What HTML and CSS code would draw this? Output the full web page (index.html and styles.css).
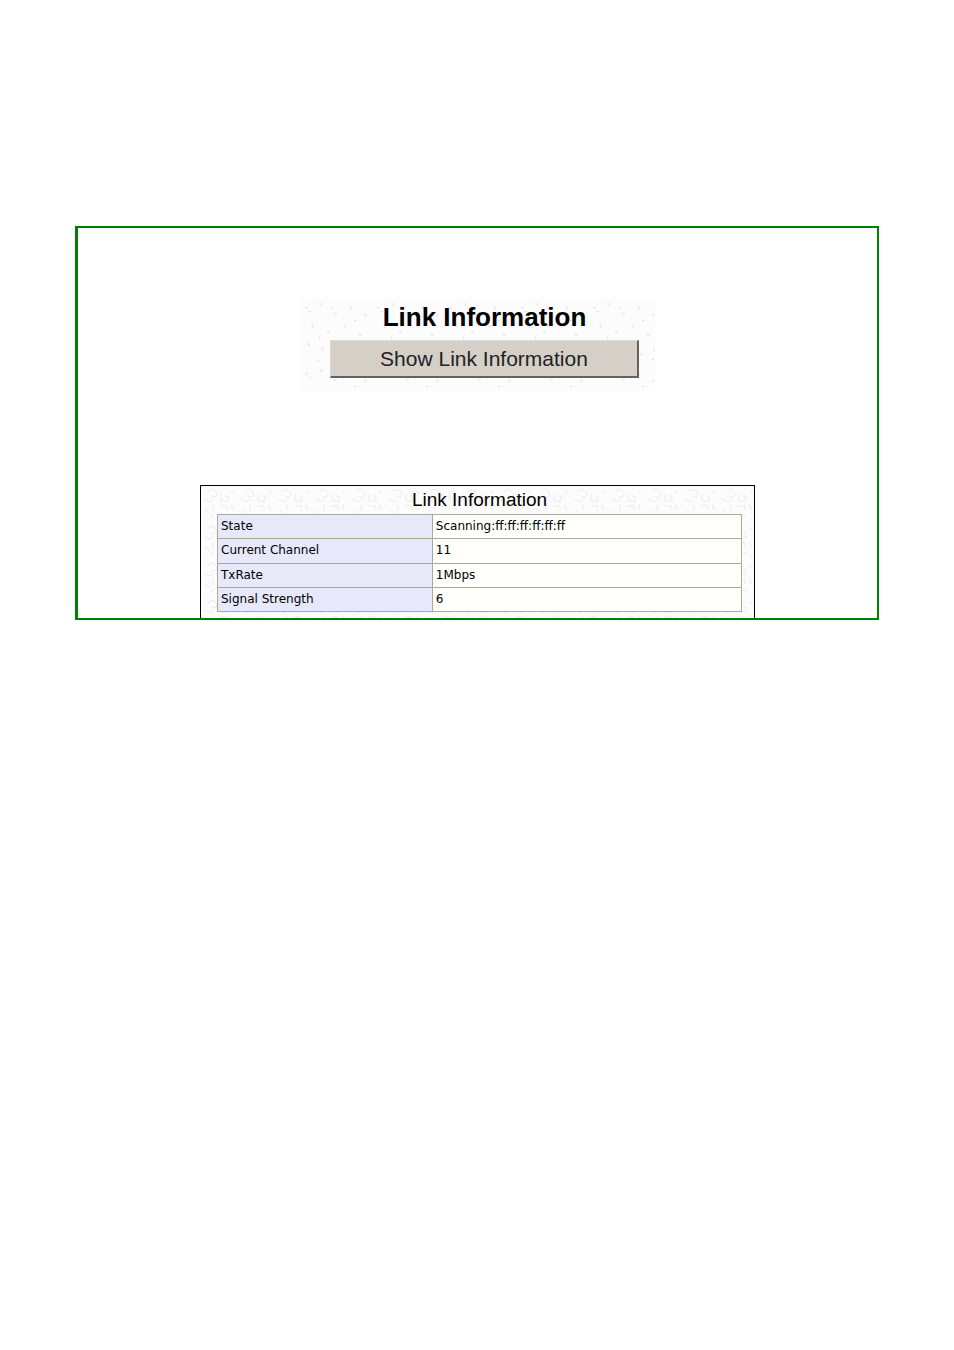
FILE: index.html
```html
<!DOCTYPE html>
<html lang="en">
<head>
<meta charset="utf-8">
<meta name="viewport" content="width=device-width, initial-scale=1">
<title>Link Information</title>
<link rel="stylesheet" href="styles.css">
</head>
<body>
<main class="frame">
  <section class="launcher speckled">
    <h1 class="launcher-title">Link Information</h1>
    <button class="launcher-button" type="button">Show Link Information</button>
  </section>
  <section class="report textured">
    <h2 class="report-title" id="report-title">Link Information</h2>
    <table class="report-table" aria-labelledby="report-title">
      <tbody>
        <tr><th scope="row">State</th><td>Scanning:ff:ff:ff:ff:ff:ff</td></tr>
        <tr><th scope="row">Current Channel</th><td>11</td></tr>
        <tr><th scope="row">TxRate</th><td>1Mbps</td></tr>
        <tr><th scope="row">Signal Strength</th><td>6</td></tr>
      </tbody>
    </table>
  </section>
</main>
</body>
</html>
```

FILE: styles.css
```css
* {
  box-sizing: border-box;
}

body {
  margin: 0;
  padding: 226px 75px;
  background: #fff;
  color: #000;
  font-family: "Liberation Sans", Arial, sans-serif;
}

.frame {
  display: flex;
  flex-direction: column;
  align-items: center;
  gap: 94px;
  padding-top: 70px;
  border: 2px solid #008000;
  border-left-width: 3px;
}

/* Paper-like backgrounds */
.speckled {
  background: #fcfcfc url("data:image/svg+xml,%3Csvg xmlns='http://www.w3.org/2000/svg' width='72' height='66'%3E%3Cg fill='none' stroke='%23ededed' stroke-width='2'%3E%3Cpath d='M5 9l3 2M20 5l2 3M33 16l4-1M50 8l2 4M64 18l3-2M12 26l1 4M27 34l3 1M44 27l2 3M58 36l4 1M7 45l3 3M22 53l1-4M37 47l4 2M52 57l3-2M66 50l1 4M16 62l3 1'/%3E%3C/g%3E%3Cg fill='%23dedede'%3E%3Cpath d='M9 13h2v1h-2zM31 9h1v2h-1zM54 22h2v1h-2zM19 39h1v2h-1zM47 42h2v1h-2zM64 61h2v1h-2z'/%3E%3C/g%3E%3C/svg%3E");
}

.textured {
  background: #fcfcfc url("data:image/svg+xml,%3Csvg xmlns='http://www.w3.org/2000/svg' width='37' height='37'%3E%3Cg fill='none' stroke='%23ebebeb'%3E%3Cpath d='M7 6q4-5 8 0t-5 5M3 13l6 3 4-3M20 8v7h7v-5h-3M30 5l4 3M19 20h7v4M12 19v6M4 24l4 3M31 18v5h3M22 30h6M9 32l4-3M33 32v3'/%3E%3C/g%3E%3C/svg%3E");
}

.launcher {
  display: flex;
  flex-direction: column;
  align-items: center;
  width: 100%;
  max-width: 355px;
  padding: 3px 16px 13px 30px;
}

.launcher-title {
  margin: 0 0 7px;
  font-size: 26px;
  line-height: 32px;
}

.launcher-button {
  width: 100%;
  height: 38px;
  padding: 0;
  border: 1px solid #dedad4;
  border-right: 2px solid #64625f;
  border-bottom: 2px solid #64625f;
  background: #d4d0c8;
  color: #222;
  font-family: inherit;
  font-size: 21px;
  line-height: 32px;
}

.report {
  width: 100%;
  max-width: 555px;
  padding: 0 12px 6px 16px;
  border: 1px solid #000;
  border-bottom: 0;
}

.report-title {
  margin: 0;
  font-size: 19px;
  font-weight: 400;
  line-height: 28px;
  text-align: center;
}

.report-table {
  width: 100%;
  height: 98px;
  border-collapse: collapse;
  table-layout: fixed;
  background: #fffffc;
  font-family: "DejaVu Sans", Verdana, sans-serif;
  font-size: 12px;
  line-height: 23px;
}

.report-table th,
.report-table td {
  padding: 0 3px;
  border: 1px solid #aaa99a;
  text-align: left;
  font-weight: 400;
}

.report-table th {
  width: 41%;
  background: #e8e8fb;
}
```
